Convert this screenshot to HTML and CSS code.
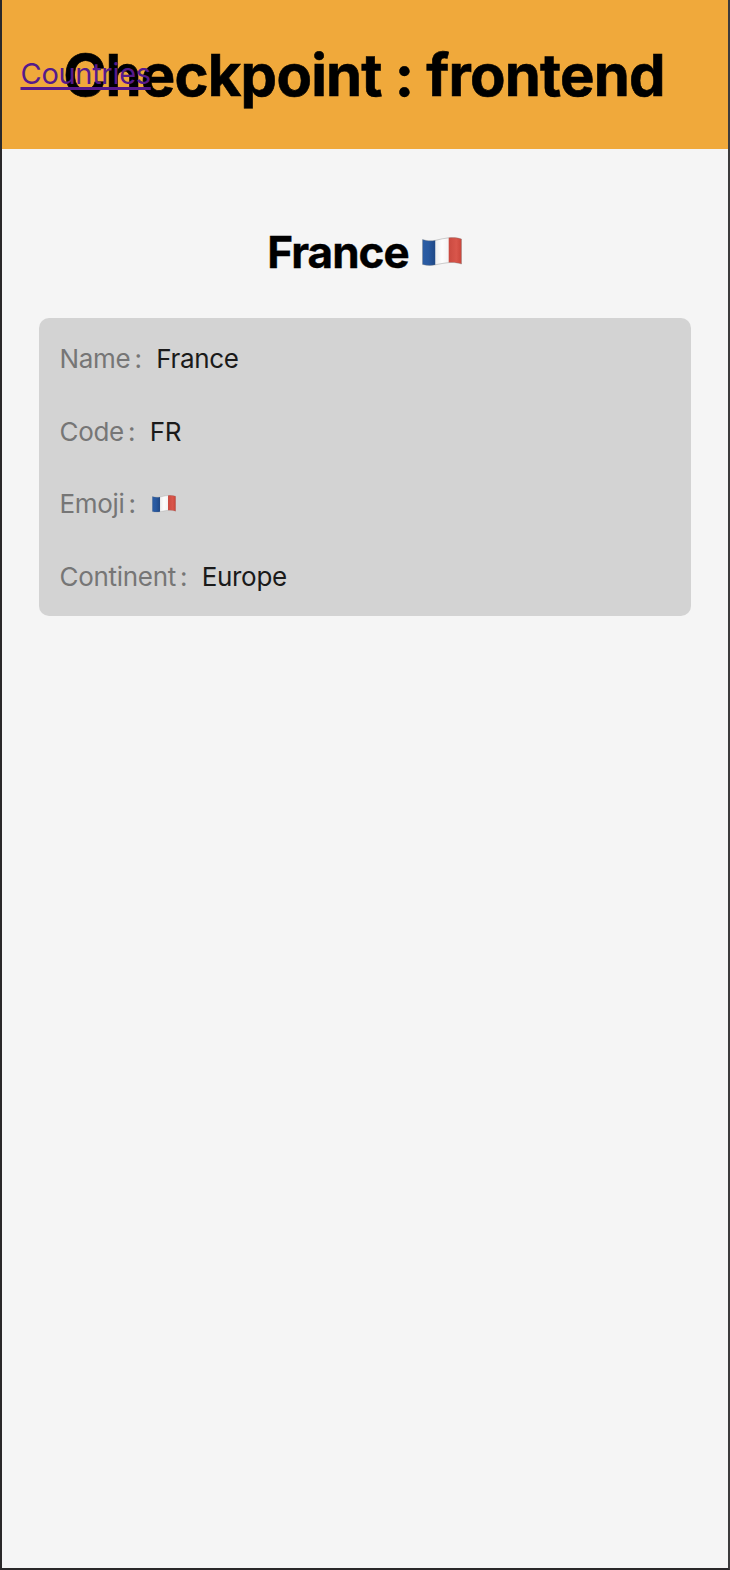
FILE: index.html
```html
<!DOCTYPE html>
<html lang="en">
<head>
<meta charset="utf-8">
<title>Checkpoint : frontend</title>
<link rel="stylesheet" href="styles.css">
</head>
<body>
<svg width="0" height="0" class="defs" aria-hidden="true">
  <defs>
    <linearGradient id="blue" x1="0" x2="1"><stop offset="0" stop-color="#2b5da5"/><stop offset=".45" stop-color="#2859a0"/><stop offset="1" stop-color="#1f4784"/></linearGradient>
    <linearGradient id="white" x1="0" x2="1"><stop offset="0" stop-color="#ededed"/><stop offset=".5" stop-color="#fdfdfd"/><stop offset="1" stop-color="#f3f3f3"/></linearGradient>
    <linearGradient id="red" x1="0" x2="1"><stop offset="0" stop-color="#ca4a40"/><stop offset=".6" stop-color="#d9564b"/><stop offset="1" stop-color="#c9453a"/></linearGradient>
    <symbol id="flag" viewBox="0 0 40 30">
      <path fill="url(#blue)" d="M.5 2.5C5 4 9 4.2 13.5 3.3V27.8C9 28.8 5 28.6.5 27.4Z"/>
      <path fill="url(#white)" d="M13.5 3.3C18 2.4 22 1.2 26.7.8V25.6C22 25.9 18 27 13.5 27.8Z"/>
      <path fill="url(#red)" d="M26.7.8C31 .4 35 .6 39.5 2V27C35 25.6 31 25.2 26.7 25.6Z"/>
      <path fill="none" stroke="#777" stroke-opacity=".5" stroke-width=".7" d="M.5 2.5C5 4 9 4.2 13.5 3.3 18 2.4 22 1.2 26.7.8 31 .4 35 .6 39.5 2V27C35 25.6 31 25.2 26.7 25.6 22 25.9 18 27 13.5 27.8 9 28.8 5 28.6.5 27.4Z"/>
    </symbol>
  </defs>
</svg>
<div class="page">
  <header class="header">
    <h1 class="title">Checkpoint : frontend</h1>
    <a class="nav-link" href="#">Countries</a>
  </header>
  <main class="main">
    <h2 class="country"><span>France</span><svg class="flag-large" role="img" aria-label="Flag of France"><use href="#flag"/></svg></h2>
    <div class="card">
      <div class="row"><span class="label">Name<span class="colon">:</span></span><span class="value">France</span></div>
      <div class="row"><span class="label">Code<span class="colon">:</span></span><span class="value">FR</span></div>
      <div class="row"><span class="label">Emoji<span class="colon">:</span></span><svg class="flag-small" role="img" aria-label="Flag of France"><use href="#flag"/></svg></div>
      <div class="row"><span class="label">Continent<span class="colon">:</span></span><span class="value">Europe</span></div>
    </div>
  </main>
</div>
</body>
</html>
```
FILE: styles.css
```css
* { box-sizing: border-box; }
body { margin: 0; font-family: Inter, sans-serif; background: #f5f5f5; color: #000; }
.defs { display: block; height: 0; }
.page { height: 1570px; border: 2px solid #2a2829; border-top: 0; border-right-color: #3c3b3c; overflow: hidden; background: #f5f5f5; }
.header { position: relative; height: 149px; padding-right: 2px; background: #f0a93b; display: flex; justify-content: center; align-items: center; }
.title { margin: 0; font-size: 58px; line-height: 70px; font-weight: 700; letter-spacing: -.8px; white-space: nowrap; -webkit-text-stroke: .6px #000; }
.nav-link { position: absolute; left: 18.5px; top: 56px; font-size: 29px; line-height: 36px; letter-spacing: -.3px; color: #551a8b; text-decoration-thickness: 2.5px; text-underline-offset: 3px; text-decoration-skip-ink: none; }
.main { padding: 77px 37px 0; }
.country { margin: 0 0 40px; height: 52px; padding-right: 1px; display: flex; justify-content: center; align-items: center; gap: 13px; font-size: 44px; line-height: 52px; font-weight: 700; letter-spacing: -1px; -webkit-text-stroke: .4px #000; }
.flag-large { width: 40px; height: 30px; }
.card { height: 297.5px; margin-right: .5px; padding: 5px 20.5px 0; border-radius: 10px; background: #d3d3d3; display: grid; grid-auto-rows: 72.6px; align-content: start; }
.row { display: flex; align-items: center; font-size: 26px; line-height: 32px; letter-spacing: -.3px; }
.label { color: #767676; }
.colon { margin-left: 4px; }
.value { margin-left: 14.5px; color: #1a1a1a; }
.flag-small { width: 24px; height: 18px; margin-left: 16px; }
```
